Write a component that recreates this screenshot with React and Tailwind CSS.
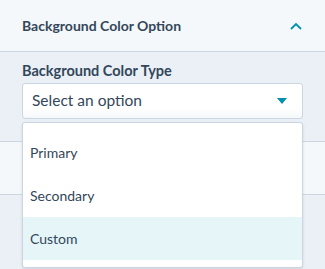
import React from "react";

export default function App() {
    const options = ["Primary", "Secondary", "Custom"];

    return (
        <div
            className="h-[269px] w-[325px] overflow-hidden bg-[#eaf0f6] text-[#33475b]"
            style={{ fontFamily: "Lato, 'Noto Sans', sans-serif" }}
        >
            <div className="flex h-[52px] items-center justify-between border-b border-[#cbd6e2] bg-[#f5f8fa] pl-[22px] pr-[22px]">
                <span className="text-[14px] font-bold">Background Color Option</span>
                <svg width="12" height="8" viewBox="0 0 12 8" className="mr-[1px]">
                    <path d="M1 7 L6 2 L11 7" fill="none" stroke="#0091ae" strokeWidth="1.8" />
                </svg>
            </div>

            <div className="relative border-b border-[#cbd6e2] px-[22px] pb-[22px] pt-[9px]">
                <label className="block text-[14.5px] font-bold leading-[20px]">
                    Background Color Type
                </label>
                <div className="mt-[2px] flex h-[36px] items-center justify-between rounded-[3px] border border-[#cbd6e2] bg-gradient-to-b from-white from-70% to-[#f5f8fa] pl-[9px] pr-[15px]">
                    <span className="text-[15.5px]">Select an option</span>
                    <svg width="10" height="6" viewBox="0 0 10 6">
                        <path d="M0 0 L10 0 L5 6 Z" fill="#0091ae" />
                    </svg>
                </div>

                <div className="absolute left-[22px] right-[22px] top-[70px] z-10 rounded-[3px] border border-[#cbd6e2] bg-white pb-[7px] pt-[8px] shadow-sm">
                    {options.map((o) => (
                        <div
                            key={o}
                            className={`flex h-[43px] items-center px-[7px] text-[14px] ${
                                o === "Custom" ? "bg-[#e5f5f8]" : ""
                            }`}
                        >
                            {o}
                        </div>
                    ))}
                </div>
            </div>

            <div className="h-[53px] border-b border-[#cbd6e2] bg-[#f5f8fa]" />
        </div>
    );
}
